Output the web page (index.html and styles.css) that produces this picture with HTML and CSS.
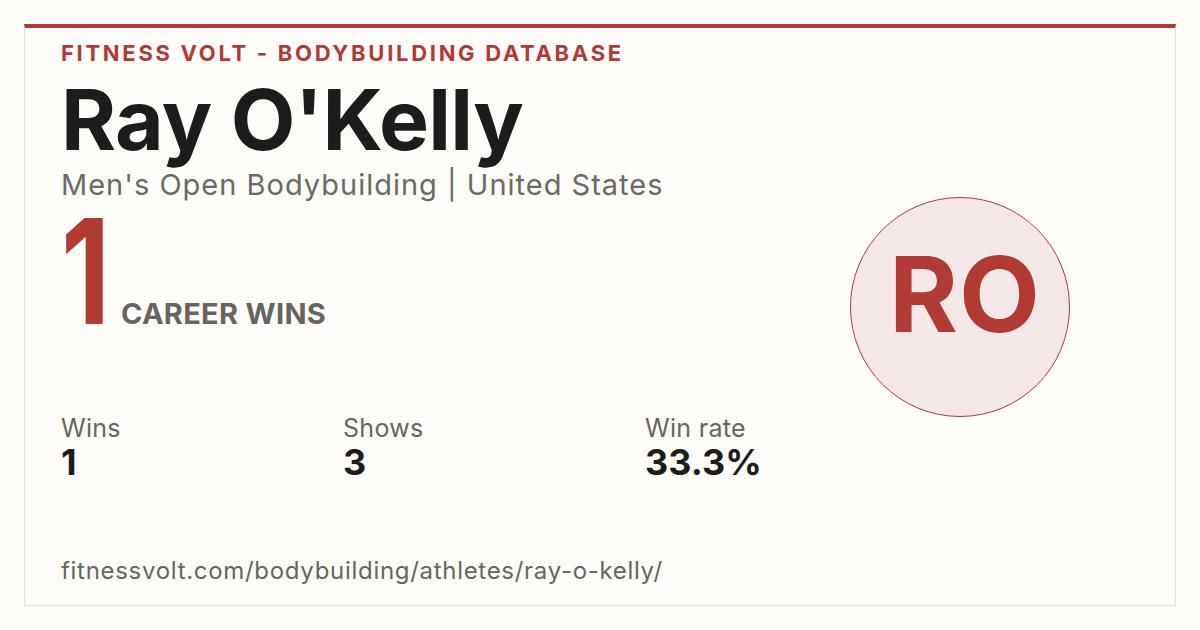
FILE: index.html
```html
<!DOCTYPE html>
<html lang="en">
<head>
<meta charset="utf-8">
<title>Ray O'Kelly - Fitness Volt</title>
<link rel="stylesheet" href="styles.css">
</head>
<body>
<div class="card">
  <div class="main">
    <div class="eyebrow">FITNESS VOLT - BODYBUILDING DATABASE</div>
    <h1 class="name">Ray O'Kelly</h1>
    <div class="sub">Men's Open Bodybuilding | United States</div>
    <div class="hero">
      <span class="hero-num">1</span>
      <span class="hero-label">CAREER WINS</span>
    </div>
    <div class="stats">
      <div class="stat">
        <div class="stat-label">Wins</div>
        <div class="stat-value">1</div>
      </div>
      <div class="stat">
        <div class="stat-label">Shows</div>
        <div class="stat-value">3</div>
      </div>
      <div class="stat">
        <div class="stat-label">Win rate</div>
        <div class="stat-value">33.3%</div>
      </div>
    </div>
    <div class="url">fitnessvolt.com/bodybuilding/athletes/ray-o-kelly/</div>
  </div>
  <div class="side">
    <div class="avatar">RO</div>
  </div>
</div>
</body>
</html>
```

FILE: styles.css
```css
html, body {
  margin: 0;
  padding: 0;
}
body {
  background: #fdfcf8;
  font-family: Inter, "Open Sans", sans-serif;
  padding: 24px;
  box-sizing: border-box;
  height: 630px;
}
.card {
  display: flex;
  box-sizing: border-box;
  height: 582px;
  border: 1px solid #e4e1da;
  border-top: 4px solid #b23a35;
  padding: 14px 36px 0 36px;
}
.main {
  flex: 1;
  display: flex;
  flex-direction: column;
}
.eyebrow {
  font-size: 22px;
  line-height: 1;
  font-weight: 700;
  letter-spacing: 2.7px;
  color: #b23a35;
}
.name {
  margin: 14px 0 0 0;
  font-size: 84px;
  line-height: 1;
  font-weight: 700;
  letter-spacing: -0.7px;
  color: #1c1c1a;
}
.sub {
  margin-top: 8px;
  font-size: 29px;
  line-height: 1;
  color: #6b6b65;
  letter-spacing: 1px;
}
.hero {
  display: flex;
  align-items: baseline;
  gap: 14px;
  margin-top: -1px;
}
.hero-num {
  display: inline-block;
  font-size: 146px;
  line-height: 1;
  font-weight: 700;
  color: #b23a35;
  letter-spacing: -17px;
  transform: scaleX(0.78);
  transform-origin: left center;
}
.hero-label {
  font-size: 29px;
  font-weight: 700;
  color: #66665f;
  letter-spacing: 0.3px;
}
.stats {
  margin-top: 72px;
  display: grid;
  grid-template-columns: 282px 302px auto;
}
.stat-label {
  font-size: 25px;
  line-height: 1;
  color: #66665f;
  letter-spacing: 0.3px;
}
.stat-value {
  margin-top: 3px;
  font-size: 36px;
  line-height: 1;
  font-weight: 700;
  color: #1c1c1a;
  letter-spacing: 0;
}
.url {
  margin-top: 79px;
  font-size: 24px;
  line-height: 1;
  color: #66665f;
  letter-spacing: 0.7px;
}
.side {
  display: flex;
  align-items: center;
  padding: 0 69px 34px 0;
}
.avatar {
  width: 220px;
  height: 220px;
  box-sizing: border-box;
  border-radius: 50%;
  border: 1.5px solid #b23a35;
  background: #f3e8e7;
  color: #b23a35;
  display: flex;
  align-items: center;
  justify-content: center;
  padding: 0 0 26px 10px;
  font-size: 105px;
  font-weight: 700;
  letter-spacing: 1px;
}
```
